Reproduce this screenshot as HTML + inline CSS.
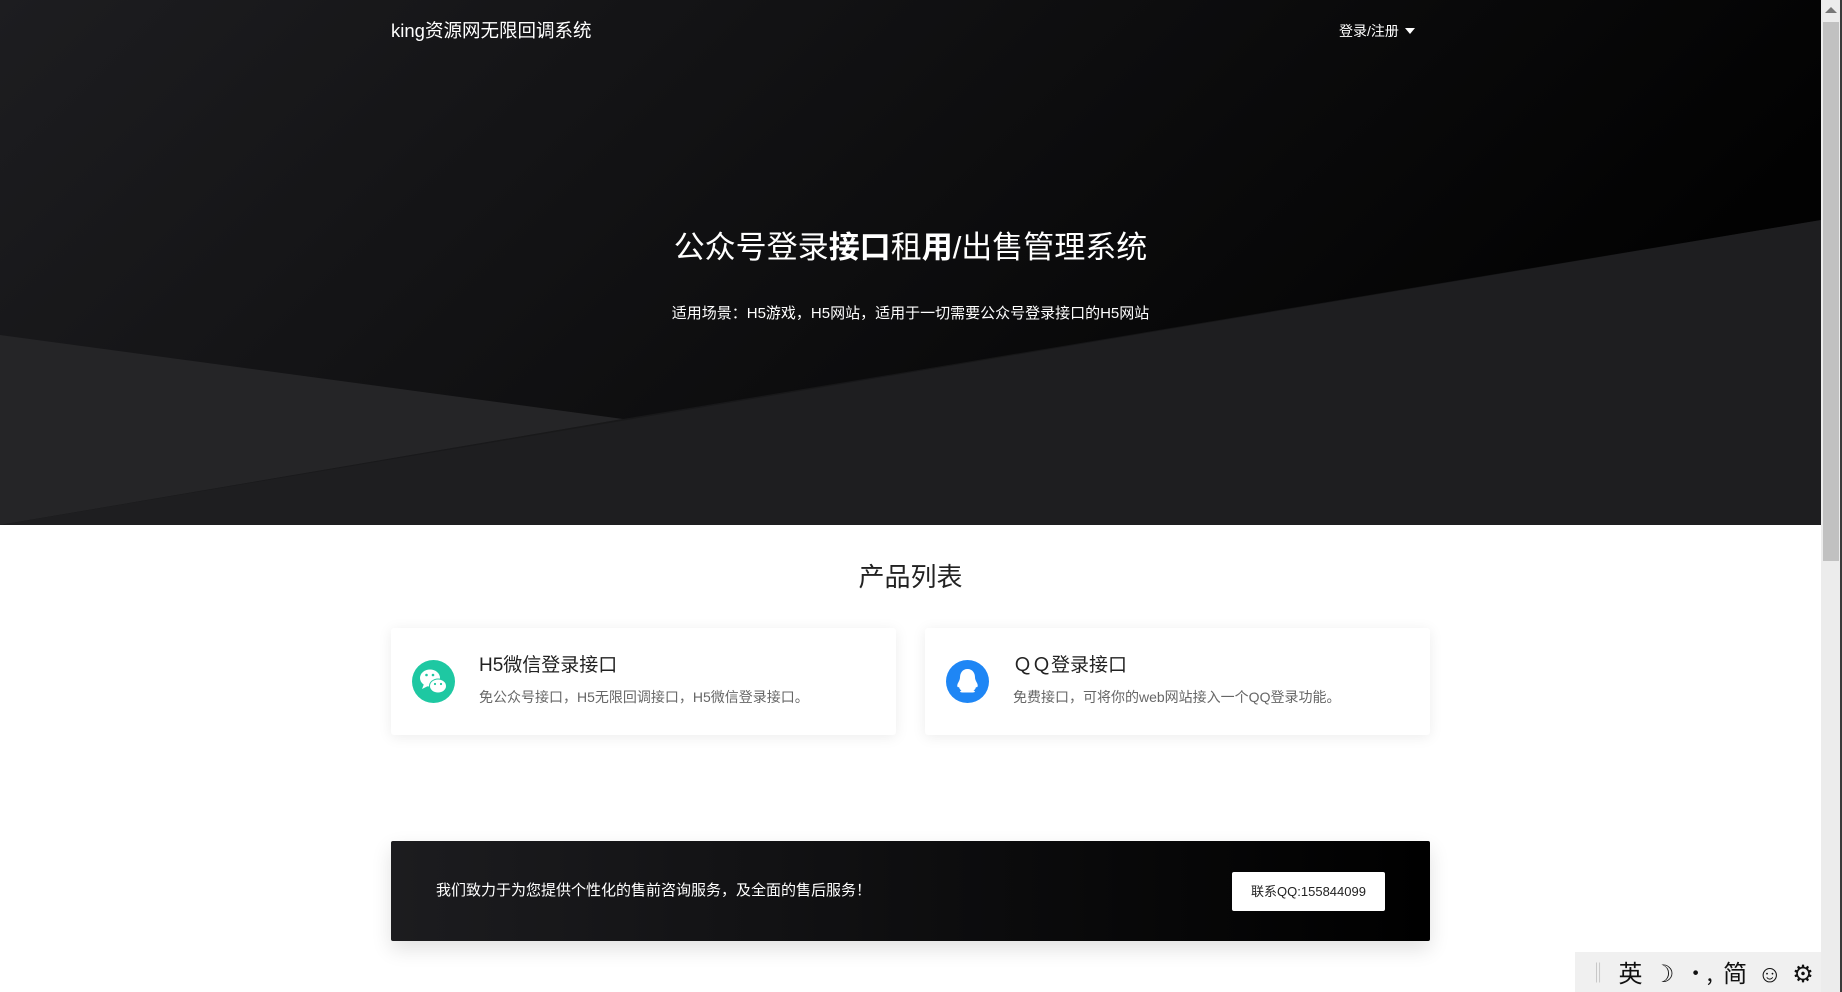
<!DOCTYPE html>
<html><head><meta charset="utf-8">
<style>
*{margin:0;padding:0;box-sizing:border-box}
body{width:1842px;height:992px;overflow:hidden;background:#fff;font-family:"Liberation Sans","Noto Sans CJK SC",sans-serif;position:relative}
.hero{position:absolute;left:0;top:0;width:1821px;height:525px;background:#141416;overflow:hidden}
.hero svg{position:absolute;left:0;top:0}
.logo{position:absolute;left:391px;top:19px;color:#fff;font-size:18.5px;line-height:24px}
.login{position:absolute;left:1339px;top:22px;color:#fff;font-size:14px;line-height:18px}
.login:after{content:"";display:inline-block;margin-left:6px;border-left:5px solid transparent;border-right:5px solid transparent;border-top:6px solid #fff;vertical-align:2px}
.t1{position:absolute;left:0;width:1821px;top:228px;text-align:center;color:#fff;font-size:31px;line-height:40px}
.t2{position:absolute;left:0;width:1821px;top:304px;text-align:center;color:#fff;font-size:15px;line-height:20px}
.sec{position:absolute;left:0;width:1821px;top:560px;text-align:center;color:#222;font-size:26px;line-height:34px}
.card{position:absolute;top:628px;width:505px;height:107px;background:#fff;border-radius:3px;box-shadow:0 2px 14px rgba(0,0,0,.08)}
.ic{position:absolute;left:21px;top:32px;width:43px;height:43px;border-radius:50%}
.ct{position:absolute;left:88px;top:26px;font-size:19px;color:#222;line-height:24px}
.cd{position:absolute;left:88px;top:59px;font-size:14px;color:#666;line-height:20px}
.bar{position:absolute;left:391px;top:841px;width:1039px;height:100px;background:linear-gradient(90deg,#1c1c1f,#000);border-radius:2px;box-shadow:0 8px 20px rgba(0,0,0,.12)}
.bar span{position:absolute;left:45px;top:40px;color:#fff;font-size:15px;line-height:20px}
.btn{position:absolute;left:841px;top:31px;width:153px;height:39px;background:#fff;border-radius:2px;color:#222;font-size:13px;line-height:39px;text-align:center}
.sb{position:absolute;left:1821px;top:0;width:21px;height:992px;background:#ececec;border-right:2px solid #3a3a3a}
.thumb{position:absolute;left:2px;top:22px;width:16px;height:539px;background:#c1c1c1}
.arr{position:absolute;left:4px;top:7px;border-left:6px solid transparent;border-right:6px solid transparent;border-bottom:6px solid #777}
.ime{position:absolute;left:1575px;top:952px;width:246px;height:40px;background:#f0f0f0;font-size:24px;color:#111;line-height:40px;font-family:"Noto Sans CJK SC",sans-serif;display:flex;justify-content:space-around;align-items:center;padding:0 2px 0 8px}
</style></head><body>
<div class="hero">
<svg width="1821" height="525">
<defs><linearGradient id="g" x1="0" y1="0" x2="1" y2="0.3"><stop offset="0" stop-color="#1d1d20"/><stop offset="1" stop-color="#020202"/></linearGradient></defs>
<rect width="1821" height="525" fill="url(#g)"/>
<polygon points="0,335 623,419 0,525" fill="#252527"/>
<polygon points="0,525 1821,220 1821,525" fill="#1c1d1f"/>
<polygon points="623,419 1821,220 1821,525 0,525" fill="#1f2022" opacity="0.6"/>
</svg>
<div class="logo">king资源网无限回调系统</div>
<div class="login">登录/注册</div>
<div class="t1">公众号登录<b>接口</b>租<b>用</b>/出售管理系统</div>
<div class="t2">适用场景：H5游戏，H5网站，适用于一切需要公众号登录接口的H5网站</div>
</div>
<div class="sec">产品列表</div>
<div class="card" style="left:391px">
<div class="ic" style="background:#1ec8a2"><svg width="43" height="43" viewBox="0 0 43 43"><ellipse cx="18" cy="18" rx="10" ry="8.5" fill="#fff"/><path d="M12 24 l-2 5 l6 -3z" fill="#fff"/><ellipse cx="26" cy="26" rx="9" ry="7.5" fill="#1ec8a2"/><ellipse cx="26" cy="26" rx="8" ry="6.5" fill="#fff"/><circle cx="14.5" cy="15" r="1.3" fill="#1ec8a2"/><circle cx="21" cy="15" r="1.3" fill="#1ec8a2"/><circle cx="23" cy="24" r="1.1" fill="#1ec8a2"/><circle cx="29" cy="24" r="1.1" fill="#1ec8a2"/></svg></div>
<div class="ct">H5微信登录接口</div>
<div class="cd">免公众号接口，H5无限回调接口，H5微信登录接口。</div>
</div>
<div class="card" style="left:925px">
<div class="ic" style="background:#1e86f5"><svg width="43" height="43" viewBox="0 0 43 43"><path d="M21.5 9c-5 0-7.5 4-7.5 8.5 0 2-1 3.5-2 5.5-1.5 3 -.5 5 1 4 .5 2 1.5 3 2.5 3.5-2 .5-2 2 1 2h10c3 0 3-1.5 1-2 1-.5 2-1.5 2.5-3.5 1.5 1 2.5-1 1-4-1-2-2-3.5-2-5.5 0-4.5-2.5-8.5-7.5-8.5z" fill="#fff"/></svg></div>
<div class="ct">ＱＱ登录接口</div>
<div class="cd">免费接口，可将你的web网站接入一个QQ登录功能。</div>
</div>
<div class="bar"><span>我们致力于为您提供个性化的售前咨询服务，及全面的售后服务！</span><div class="btn">联系QQ:155844099</div></div>
<div class="sb"><div class="arr"></div><div class="thumb"></div></div>
<div class="ime"><span style="color:#bbb;font-size:20px">‖</span><span>英</span><span>☽</span><span style="font-size:22px">•,</span><span>简</span><span>☺</span><span>⚙</span></div>
</body></html>
